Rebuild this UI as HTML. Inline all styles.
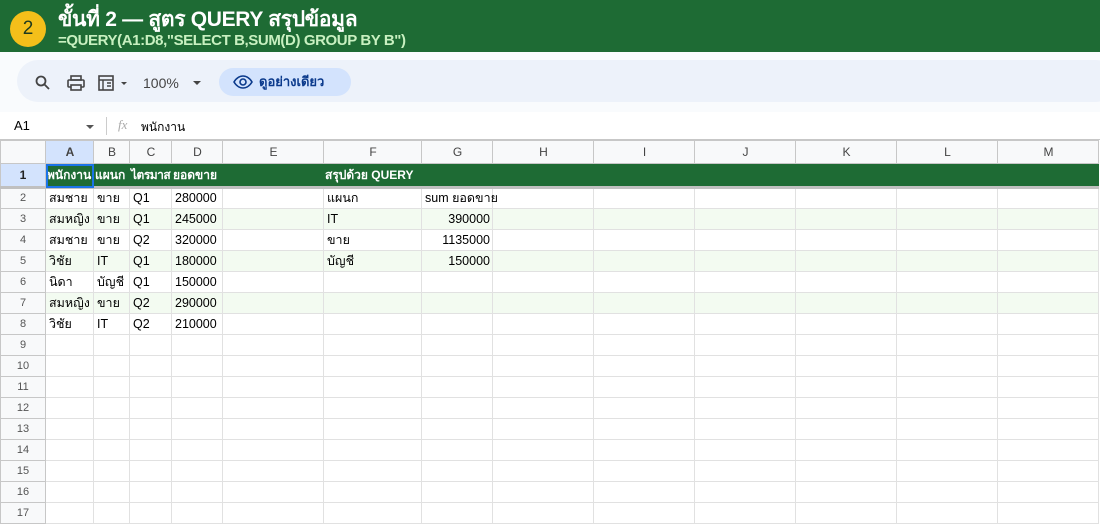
<!DOCTYPE html><html><head><meta charset="utf-8"><style>
*{margin:0;padding:0;box-sizing:border-box}
body{width:1100px;height:522px;overflow:hidden;background:#fff;font-family:"Liberation Sans",sans-serif;position:relative}
.hdr{position:absolute;left:0;top:0;width:1100px;height:52px;background:#1e6b34}
.badge{position:absolute;left:10px;top:11px;width:36px;height:36px;border-radius:50%;background:#f4bf1a;color:#1e3a1e;font-size:19px;text-align:center;line-height:36px}
.t1{position:absolute;left:58px;top:8px;color:#fff;font-size:21px;line-height:24px;font-weight:bold;letter-spacing:-0.3px}
.t2{position:absolute;left:58px;top:33px;color:#c8f0c0;font-size:15px;line-height:16px;font-weight:bold;letter-spacing:-0.4px}
.tb{position:absolute;left:0;top:52px;width:1100px;height:60px;background:#f9fbfd}
.pill{position:absolute;left:17px;top:8px;width:1100px;height:42px;border-radius:21px;background:#edf2fa}
.ic{position:absolute;color:#444;font-size:15px}
.prev{position:absolute;left:219px;top:16px;width:132px;height:28px;border-radius:14px;background:#d3e3fd;color:#0b3a8c;font-size:13px;font-weight:bold;line-height:28px;padding-left:40px}
.fb{position:absolute;left:0;top:112px;width:1100px;height:28px;border-bottom:1px solid #c7c7c7;font-size:13px}
table{position:absolute;left:0;top:140px;width:1098px;border-collapse:collapse;table-layout:fixed;font-size:12.5px}
td{border:1px solid #e1e1e1;height:21px;line-height:19px;padding:0 2px 0 3px;white-space:nowrap;overflow:hidden;color:#000}
tr{height:21px}
tr.ch td{height:23px;background:#f8f9fa;color:#444;text-align:center;font-size:12px;border-color:#c7c7c7}
td.rh{background:#f8f9fa;color:#555;text-align:center;font-size:11px;border-color:#c7c7c7;padding:0}
tr.g td:not(.rh){background:#f3fbf1}
tr.r1{height:24px}
tr.r1 td{height:24px;background:#1e6b34;color:#fff;font-weight:bold;border-color:#1e6b34;border-bottom:3px solid #c0c0c0;padding:0 1px;font-size:12px;line-height:20px}
tr.r1 td.rh{background:#d3e3fd;color:#222;border-color:#c7c7c7;border-bottom:3px solid #c0c0c0}
.r{text-align:right}
.ov{overflow:visible}
</style></head><body>
<div class="hdr"><div class="badge">2</div><div class="t1">ขั้นที่ 2 — สูตร QUERY สรุปข้อมูล</div><div class="t2">=QUERY(A1:D8,"SELECT B,SUM(D) GROUP BY B")</div></div>
<div class="tb"><div class="pill"></div>
<svg style="position:absolute;left:35px;top:23px" width="16" height="16" viewBox="0 0 16 16"><circle cx="6" cy="6" r="4.5" fill="none" stroke="#444" stroke-width="1.8"/><path d="M9.5 9.5L14 14" stroke="#444" stroke-width="1.8"/></svg>
<svg style="position:absolute;left:67px;top:23px" width="18" height="16" viewBox="0 0 18 16"><rect x="4" y="1" width="10" height="4" fill="none" stroke="#444" stroke-width="1.6"/><rect x="1" y="5" width="16" height="7" rx="1" fill="none" stroke="#444" stroke-width="1.6"/><rect x="4" y="10" width="10" height="5" fill="#edf2fa" stroke="#444" stroke-width="1.6"/></svg>
<svg style="position:absolute;left:98px;top:22px" width="32" height="18" viewBox="0 0 32 18"><rect x="1" y="2" width="14" height="14" fill="none" stroke="#444" stroke-width="1.6"/><path d="M1 6h14M5 6v10M9 9h4M9 12h4" stroke="#444" stroke-width="1.4"/><path d="M23 8l3 3 3-3z" fill="#444"/></svg>
<div class="ic" style="left:143px;top:23px;font-size:14px">100%</div>
<svg style="position:absolute;left:192px;top:28px" width="10" height="6"><path d="M1 1l4 4 4-4z" fill="#444"/></svg>
<div class="prev">ดูอย่างเดียว</div>
<svg style="position:absolute;left:233px;top:23px" width="20" height="14" viewBox="0 0 20 14"><path d="M1 7C4 2 8 1 10 1s6 1 9 6c-3 5-7 6-9 6S4 12 1 7z" fill="none" stroke="#0b3a8c" stroke-width="1.6"/><circle cx="10" cy="7" r="3" fill="none" stroke="#0b3a8c" stroke-width="1.6"/></svg>
</div>
<div class="fb"><span style="position:absolute;left:14px;top:6px">A1</span><svg style="position:absolute;left:85px;top:12px" width="10" height="6"><path d="M1 1l4 4 4-4z" fill="#555"/></svg><div style="position:absolute;left:106px;top:5px;width:1px;height:18px;background:#ccc"></div><span style="position:absolute;left:118px;top:5px;color:#aaa;font-style:italic;font-family:'Liberation Serif',serif">fx</span><span style="position:absolute;left:141px;top:6px;font-size:12px">พนักงาน</span></div>
<table>
<colgroup><col style="width:45px"><col style="width:48px"><col style="width:36px"><col style="width:42px"><col style="width:51px"><col style="width:101px"><col style="width:98px"><col style="width:71px"><col style="width:101px"><col style="width:101px"><col style="width:101px"><col style="width:101px"><col style="width:101px"><col style="width:101px"></colgroup>
<tr class="ch"><td></td><td style="background:#d3e3fd;font-weight:bold">A</td><td>B</td><td>C</td><td>D</td><td>E</td><td>F</td><td>G</td><td>H</td><td>I</td><td>J</td><td>K</td><td>L</td><td>M</td></tr>
<tr class="r1"><td class="rh">1</td><td style="outline:2px solid #1a73e8;outline-offset:-2px">พนักงาน</td><td>แผนก</td><td style="letter-spacing:-0.5px">ไตรมาส</td><td>ยอดขาย</td><td></td><td>สรุปด้วย QUERY</td><td></td><td></td><td></td><td></td><td></td><td></td><td></td></tr>
<tr><td class="rh">2</td><td>สมชาย</td><td>ขาย</td><td>Q1</td><td>280000</td><td></td><td>แผนก</td><td class="ov">sum ยอดขาย</td><td></td><td></td><td></td><td></td><td></td><td></td></tr>
<tr class="g"><td class="rh">3</td><td>สมหญิง</td><td>ขาย</td><td>Q1</td><td>245000</td><td></td><td>IT</td><td class="r">390000</td><td></td><td></td><td></td><td></td><td></td><td></td></tr>
<tr><td class="rh">4</td><td>สมชาย</td><td>ขาย</td><td>Q2</td><td>320000</td><td></td><td>ขาย</td><td class="r">1135000</td><td></td><td></td><td></td><td></td><td></td><td></td></tr>
<tr class="g"><td class="rh">5</td><td>วิชัย</td><td>IT</td><td>Q1</td><td>180000</td><td></td><td>บัญชี</td><td class="r">150000</td><td></td><td></td><td></td><td></td><td></td><td></td></tr>
<tr><td class="rh">6</td><td>นิดา</td><td>บัญชี</td><td>Q1</td><td>150000</td><td></td><td></td><td></td><td></td><td></td><td></td><td></td><td></td><td></td></tr>
<tr class="g"><td class="rh">7</td><td>สมหญิง</td><td>ขาย</td><td>Q2</td><td>290000</td><td></td><td></td><td></td><td></td><td></td><td></td><td></td><td></td><td></td></tr>
<tr><td class="rh">8</td><td>วิชัย</td><td>IT</td><td>Q2</td><td>210000</td><td></td><td></td><td></td><td></td><td></td><td></td><td></td><td></td><td></td></tr>
<tr><td class="rh">9</td><td></td><td></td><td></td><td></td><td></td><td></td><td></td><td></td><td></td><td></td><td></td><td></td><td></td></tr>
<tr><td class="rh">10</td><td></td><td></td><td></td><td></td><td></td><td></td><td></td><td></td><td></td><td></td><td></td><td></td><td></td></tr>
<tr><td class="rh">11</td><td></td><td></td><td></td><td></td><td></td><td></td><td></td><td></td><td></td><td></td><td></td><td></td><td></td></tr>
<tr><td class="rh">12</td><td></td><td></td><td></td><td></td><td></td><td></td><td></td><td></td><td></td><td></td><td></td><td></td><td></td></tr>
<tr><td class="rh">13</td><td></td><td></td><td></td><td></td><td></td><td></td><td></td><td></td><td></td><td></td><td></td><td></td><td></td></tr>
<tr><td class="rh">14</td><td></td><td></td><td></td><td></td><td></td><td></td><td></td><td></td><td></td><td></td><td></td><td></td><td></td></tr>
<tr><td class="rh">15</td><td></td><td></td><td></td><td></td><td></td><td></td><td></td><td></td><td></td><td></td><td></td><td></td><td></td></tr>
<tr><td class="rh">16</td><td></td><td></td><td></td><td></td><td></td><td></td><td></td><td></td><td></td><td></td><td></td><td></td><td></td></tr>
<tr><td class="rh">17</td><td></td><td></td><td></td><td></td><td></td><td></td><td></td><td></td><td></td><td></td><td></td><td></td><td></td></tr>
</table>
</body></html>
